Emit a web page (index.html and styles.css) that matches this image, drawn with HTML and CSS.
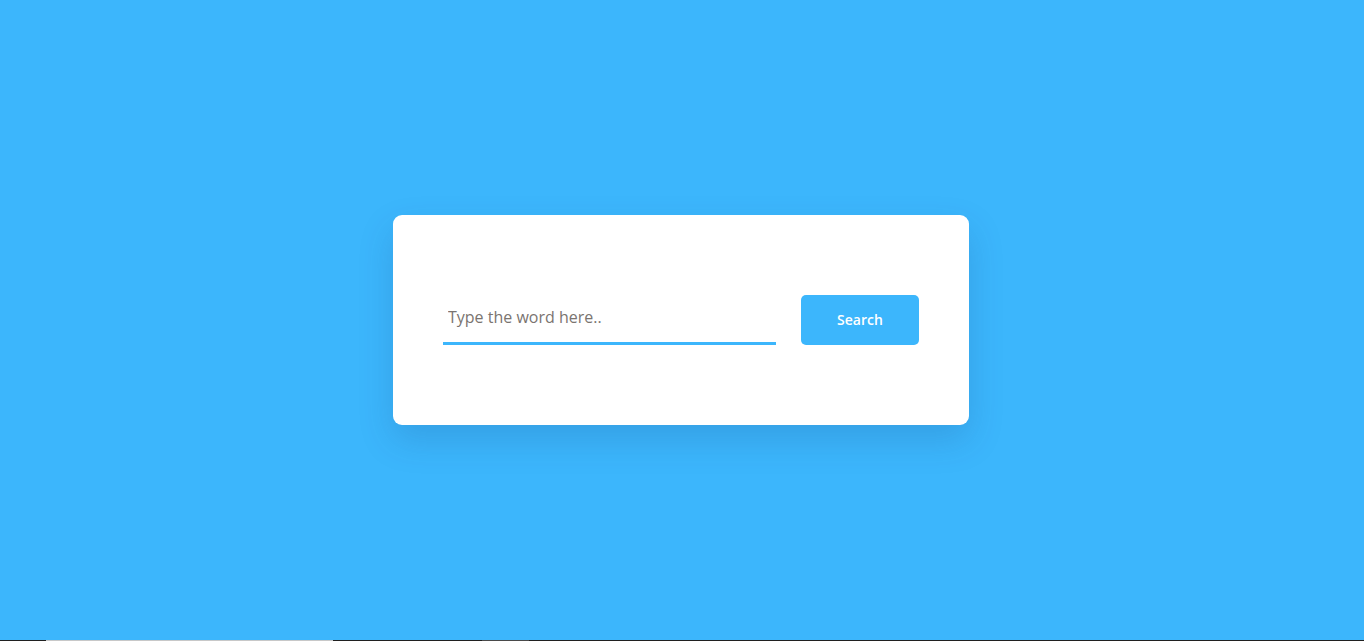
FILE: index.html
```html
<!DOCTYPE html>
<html lang="en">
<head>
<meta charset="utf-8">
<title>Search</title>
<link rel="stylesheet" href="styles.css">
</head>
<body>
<main class="stage">
  <form class="card">
    <input class="word-input" type="text" placeholder="Type the word here..">
    <button class="search-btn" type="button">Search</button>
  </form>
</main>
<div class="taskbar">
  <span class="seg dark s1"></span>
  <span class="seg light s2"></span>
  <span class="seg dark s3"></span>
  <span class="seg mid s4"></span>
  <span class="seg dark s5"></span>
</div>
</body>
</html>
```

FILE: styles.css
```css
* { box-sizing: border-box; }
html, body { margin: 0; padding: 0; }
body {
  height: 100vh;
  display: flex;
  flex-direction: column;
  background: #3cb6fc;
  font-family: "Open Sans", "Liberation Sans", sans-serif;
}
.stage {
  flex: 1;
  display: flex;
  align-items: center;
  justify-content: center;
  padding-right: 2px;
}
.card {
  width: 576px;
  background: #fff;
  border-radius: 9px;
  padding: 80px 50px;
  display: flex;
  align-items: flex-end;
  gap: 25px;
  box-shadow: 0 15px 35px rgba(20, 60, 120, 0.18);
}
.word-input {
  width: 333px;
  height: 50px;
  border: none;
  border-bottom: 3px solid #3cb6fc;
  outline: none;
  padding: 0 5px 3px;
  font-family: inherit;
  font-size: 16px;
  color: #333;
  background: transparent;
}
.word-input::placeholder { color: #7a7470; }
.search-btn {
  width: 118px;
  height: 50px;
  border: none;
  border-radius: 5px;
  background: #3cb6fc;
  color: #fff;
  font-family: inherit;
  font-size: 14px;
  font-weight: 600;
  padding: 0 0 2px;
  cursor: pointer;
}
.taskbar {
  height: 1px;
  display: flex;
}
.seg { display: block; height: 1px; }
.dark { background: #202020; }
.light { background: #c8c8c8; }
.mid { background: #4a4a4a; }
.s1 { width: 46px; }
.s2 { width: 287px; }
.s3 { width: 149px; }
.s4 { width: 47px; }
.s5 { flex: 1; }
```
